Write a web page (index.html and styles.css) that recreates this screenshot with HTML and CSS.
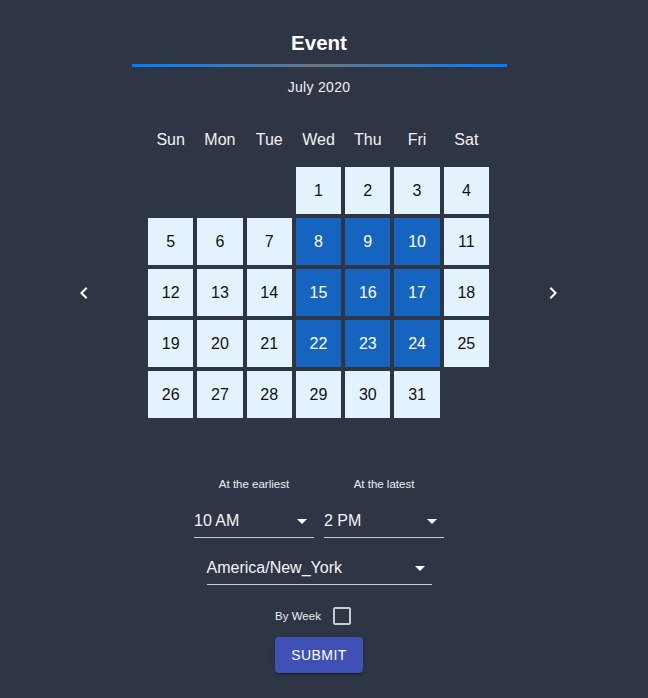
FILE: index.html
```html
<!DOCTYPE html>
<html>
<head>
<meta charset="utf-8">
<link rel="stylesheet" href="styles.css">
</head>
<body>
<div class="page">
  <h1 class="title">Event</h1>
  <div class="rule"></div>
  <div class="month">July 2020</div>

  <div class="weekdays">
    <span>Sun</span><span>Mon</span><span>Tue</span><span>Wed</span><span>Thu</span><span>Fri</span><span>Sat</span>
  </div>

  <div class="cal-row">
    <button class="nav" aria-label="previous">
      <svg viewBox="0 0 24 24" width="24" height="24"><path d="M15.41 7.41L14 6l-6 6 6 6 1.41-1.41L10.83 12z" fill="#fff"/></svg>
    </button>
    <div class="grid">
      <span class="empty"></span><span class="empty"></span><span class="empty"></span>
      <span class="day">1</span><span class="day">2</span><span class="day">3</span><span class="day">4</span>
      <span class="day">5</span><span class="day">6</span><span class="day">7</span>
      <span class="day sel">8</span><span class="day sel">9</span><span class="day sel">10</span><span class="day">11</span>
      <span class="day">12</span><span class="day">13</span><span class="day">14</span>
      <span class="day sel">15</span><span class="day sel">16</span><span class="day sel">17</span><span class="day">18</span>
      <span class="day">19</span><span class="day">20</span><span class="day">21</span>
      <span class="day sel">22</span><span class="day sel">23</span><span class="day sel">24</span><span class="day">25</span>
      <span class="day">26</span><span class="day">27</span><span class="day">28</span><span class="day">29</span><span class="day">30</span><span class="day">31</span>
    </div>
    <button class="nav" aria-label="next">
      <svg viewBox="0 0 24 24" width="24" height="24"><path d="M10 6L8.59 7.41 13.17 12l-4.58 4.59L10 18l6-6z" fill="#fff"/></svg>
    </button>
  </div>

  <div class="times">
    <div class="field">
      <div class="label">At the earliest</div>
      <div class="select small">
        <span>10 AM</span>
        <svg viewBox="0 0 24 24" width="24" height="24"><path d="M7 10l5 5 5-5z" fill="#fff"/></svg>
      </div>
    </div>
    <div class="field">
      <div class="label">At the latest</div>
      <div class="select small">
        <span>2 PM</span>
        <svg viewBox="0 0 24 24" width="24" height="24"><path d="M7 10l5 5 5-5z" fill="#fff"/></svg>
      </div>
    </div>
  </div>

  <div class="select tz">
    <span>America/New_York</span>
    <svg viewBox="0 0 24 24" width="24" height="24"><path d="M7 10l5 5 5-5z" fill="#fff"/></svg>
  </div>

  <div class="byweek">
    <span class="bw-label">By Week</span>
    <span class="checkbox"><span class="box"></span></span>
  </div>

  <button class="submit">SUBMIT</button>
</div>
</body>
</html>
```

FILE: styles.css
```css
html, body {
  margin: 0;
  padding: 0;
  background: #2e3646;
}
body {
  font-family: "Liberation Sans", Arial, sans-serif;
  color: #fff;
  width: 648px;
  height: 698px;
  overflow: hidden;
}
.page {
  width: 638px;
  display: flex;
  flex-direction: column;
  align-items: center;
}
.title {
  margin: 31px 0 0;
  font-size: 20.5px;
  line-height: 24px;
  font-weight: bold;
}
.rule {
  margin-top: 9px;
  width: 375px;
  height: 3px;
  background: linear-gradient(90deg, #007bff 0%, #3f7ab8 30%, #6b7580 50%, #3f7ab8 70%, #007bff 100%);
}
.month {
  margin-top: 12px;
  font-size: 14px;
  letter-spacing: 0.3px;
  line-height: 16px;
  color: #f2f2f2;
}
.weekdays {
  margin-top: 21px;
  margin-right: 1px;
  width: 341px;
  display: grid;
  grid-template-columns: repeat(7, 1fr);
  column-gap: 4px;
  height: 47px;
}
.weekdays span {
  display: flex;
  align-items: center;
  justify-content: center;
  font-size: 16px;
  color: #f2f2f2;
}
.cal-row {
  margin-top: 4px;
  padding-right: 1px;
  display: flex;
  align-items: center;
  gap: 40px;
}
.nav {
  width: 48px;
  height: 48px;
  border: 0;
  padding: 0;
  background: transparent;
  display: flex;
  align-items: center;
  justify-content: center;
}
.nav svg { display: block; }
.grid {
  width: 341px;
  display: grid;
  grid-template-columns: repeat(7, 1fr);
  grid-auto-rows: 47px;
  gap: 4px;
}
.day {
  background: #e3f2fd;
  color: #111;
  font-size: 16px;
  display: flex;
  align-items: center;
  justify-content: center;
}
.day.sel {
  background: #1565c0;
  color: #fff;
}
.times {
  margin-top: 60px;
  display: flex;
  gap: 10px;
}
.field {
  width: 120px;
  display: flex;
  flex-direction: column;
  align-items: center;
}
.label {
  font-size: 11.5px;
  line-height: 13px;
  color: #eee;
}
.select {
  box-sizing: border-box;
  display: flex;
  align-items: center;
  justify-content: space-between;
  border-bottom: 1px solid #c9ccd1;
  height: 33px;
  font-size: 16px;
  color: #f4f4f4;
}
.select svg { display: block; flex: none; }
.select.small {
  margin-top: 14px;
  width: 120px;
}
.tz {
  margin-top: 14px;
  width: 225px;
}
.byweek {
  margin-top: 10px;
  display: flex;
  align-items: center;
}
.bw-label {
  font-size: 11.5px;
  color: #eee;
}
.checkbox {
  width: 42px;
  height: 42px;
  display: flex;
  align-items: center;
  justify-content: center;
}
.box {
  box-sizing: border-box;
  width: 18px;
  height: 18px;
  border: 2px solid #c7cbd0;
  border-radius: 2px;
}
.submit {
  width: 88px;
  height: 36px;
  border: 0;
  border-radius: 4px;
  background: #3f51b5;
  color: #fff;
  font-family: "Liberation Sans", Arial, sans-serif;
  font-size: 14px;
  letter-spacing: 0.4px;
  box-shadow: 0 3px 1px -2px rgba(0,0,0,0.2), 0 2px 2px 0 rgba(0,0,0,0.14), 0 1px 5px 0 rgba(0,0,0,0.12);
  padding: 0;
}
```
